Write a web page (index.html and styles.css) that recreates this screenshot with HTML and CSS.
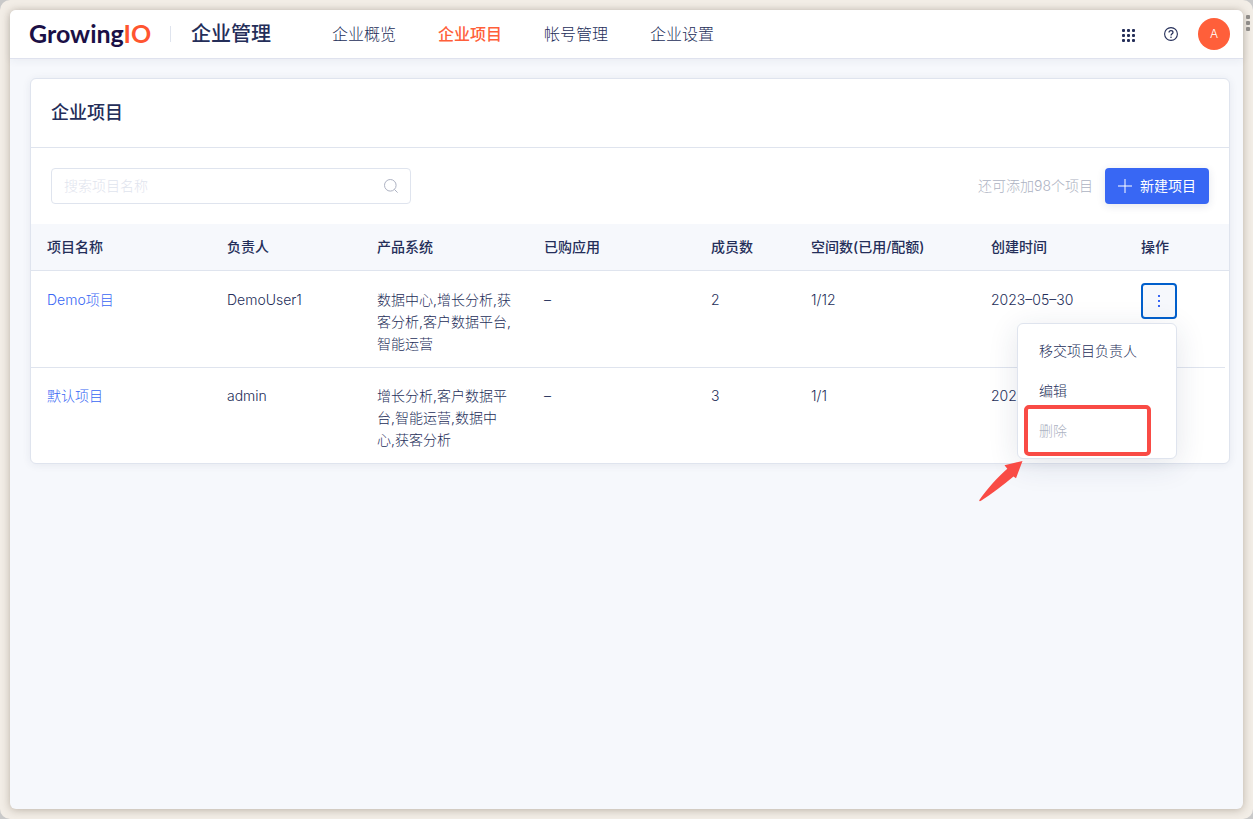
FILE: index.html
```html
<!DOCTYPE html>
<html lang="zh-CN">
<head>
<meta charset="utf-8">
<meta name="viewport" content="width=device-width, initial-scale=1">
<title>企业项目</title>
<link rel="stylesheet" href="styles.css">
</head>
<body>
<div class="desktop">
  <div class="window-grip"><i></i><i></i><i></i></div>
  <div class="window">
    <header class="topbar">
      <a class="logo" href="#">Growing<span class="logo-accent">IO</span></a>
      <span class="topbar-divider"></span>
      <span class="topbar-title">企业管理</span>
      <nav class="nav">
        <a class="nav-link" href="#">企业概览</a>
        <a class="nav-link active" href="#" aria-current="page">企业项目</a>
        <a class="nav-link" href="#">帐号管理</a>
        <a class="nav-link" href="#">企业设置</a>
      </nav>
      <div class="tools">
        <button class="icon-button" type="button" aria-label="应用">
          <svg width="16" height="18" viewBox="0 0 16 18" fill="currentColor"><rect x="1" y="4" width="3" height="3" rx="1"/><rect x="6" y="4" width="3" height="3" rx="1"/><rect x="11" y="4" width="3" height="3" rx="1"/><rect x="1" y="9" width="3" height="3" rx="1"/><rect x="6" y="9" width="3" height="3" rx="1"/><rect x="11" y="9" width="3" height="3" rx="1"/><rect x="1" y="14" width="3" height="3" rx="1"/><rect x="6" y="14" width="3" height="3" rx="1"/><rect x="11" y="14" width="3" height="3" rx="1"/></svg>
        </button>
        <button class="icon-button" type="button" aria-label="帮助">
          <svg width="14" height="14" viewBox="0 0 14 14" fill="none" stroke="currentColor"><circle cx="7" cy="7" r="6.4" stroke-width="1.1"/><path d="M5 5.6c0-1.2.8-2 2-2s2 .8 2 1.8c0 1.3-2 1.4-2 3" stroke-width="1.2"/><circle cx="7" cy="10.2" r="0.8" fill="currentColor" stroke="none"/></svg>
        </button>
        <button class="avatar" type="button">A</button>
      </div>
    </header>
    <main class="content">
      <section class="card">
        <h1 class="card-title">企业项目</h1>
        <div class="toolbar">
          <label class="search">
            <input class="search-input" type="text" placeholder="搜索项目名称" aria-label="搜索项目名称">
            <svg class="search-icon" width="14" height="14" viewBox="0 0 14 14" fill="none" stroke="currentColor"><circle cx="6.3" cy="6.3" r="5.8"/><path d="M10.4 10.4l3.2 3.2"/></svg>
          </label>
          <span class="quota">还可添加98个项目</span>
          <button class="create" type="button">
            <svg width="14" height="14" viewBox="0 0 14 14" stroke="currentColor"><path d="M7 0v14M0 7h14"/></svg>
            新建项目
          </button>
        </div>
        <table class="table">
          <colgroup>
            <col class="col-wide"><col class="col-mid"><col><col><col class="col-count"><col class="col-wide"><col class="col-mid"><col class="col-count"><col class="col-gutter">
          </colgroup>
          <thead>
            <tr><th>项目名称</th><th>负责人</th><th>产品系统</th><th>已购应用</th><th>成员数</th><th>空间数(已用/配额)</th><th>创建时间</th><th>操作</th><th class="gutter"></th></tr>
          </thead>
          <tbody>
            <tr>
              <td><a class="link" href="#">Demo项目</a></td>
              <td>DemoUser1</td>
              <td>数据中心,增长分析,获客分析,客户数据平台,智能运营</td>
              <td>–</td>
              <td>2</td>
              <td>1/12</td>
              <td>2023–05–30</td>
              <td class="action-cell">
                <div class="actions">
                  <button class="more" type="button" aria-label="更多操作" aria-expanded="true">
                    <svg width="4" height="14" viewBox="0 0 4 14" fill="currentColor"><rect x="1" y="1" width="2" height="2"/><rect x="1" y="6" width="2" height="2"/><rect x="1" y="11" width="2" height="2"/></svg>
                  </button>
                  <div class="menu">
                    <button class="menu-item" type="button">移交项目负责人</button>
                    <button class="menu-item" type="button">编辑</button>
                    <button class="menu-item" type="button" disabled>删除</button>
                    <span class="highlight"></span>
                    <svg class="arrow" width="46" height="44" viewBox="0 0 46 44" fill="#f94b45"><path d="M44.5 2 26.5 6.2 29.3 9.8C20 18 9 30 1.2 41.2Q1.4 42.8 3 41.8C14 34.5 25 26.5 35.5 17.5L38 19.2Z"/></svg>
                  </div>
                </div>
              </td>
              <td class="gutter"></td>
            </tr>
            <tr>
              <td><a class="link" href="#">默认项目</a></td>
              <td>admin</td>
              <td>增长分析,客户数据平台,智能运营,数据中心,获客分析</td>
              <td>–</td>
              <td>3</td>
              <td>1/1</td>
              <td>202</td>
              <td></td>
              <td class="gutter"></td>
            </tr>
          </tbody>
        </table>
      </section>
    </main>
  </div>
</div>
</body>
</html>
```
FILE: styles.css
```css
* { box-sizing: border-box; }

body {
  margin: 0;
  background: #c9c9c9;
  color: #242e59;
  font: 300 14px/22px Inter, "Noto Sans CJK SC", sans-serif;
}

button, input { font: inherit; color: inherit; }
button { border: 0; background: none; padding: 0; cursor: pointer; }
a { color: inherit; text-decoration: none; }

.desktop {
  position: relative;
  display: flex;
  min-height: 100vh;
  padding: 10px;
  border-radius: 10px;
  background: #f2ede6;
}

.window-grip {
  position: absolute;
  top: 15px;
  right: 3px;
  display: grid;
  gap: 2px;
}
.window-grip i { width: 4px; height: 4px; border-radius: 1px; background: #8f8c89; }

.window {
  flex: 1;
  border-radius: 6px;
  background: #f6f8fc;
  box-shadow: 0 1px 8px rgba(60, 40, 20, 0.3);
}

.topbar {
  display: flex;
  align-items: center;
  height: 49px;
  padding: 0 13px 0 19px;
  border-bottom: 1px solid #dfe2ee;
  border-radius: 6px 6px 0 0;
  background: #fff;
  box-shadow: 0 2px 8px rgba(36, 46, 89, 0.06);
}

.logo {
  width: 121px;
  padding-bottom: 2px;
  color: #1b1046;
  font: 700 25px/30px Lato, sans-serif;
  white-space: nowrap;
}
.logo-accent { color: #ff5530; }

.topbar-divider { width: 1px; height: 16px; margin: 0 20px; background: #dfe4ee; }
.topbar-title { font-size: 20px; font-weight: 500; }

.nav { display: flex; gap: 42px; margin-left: 61px; font-size: 16px; }
.nav-link.active { color: #ff5f3a; font-weight: 500; }

.tools { display: flex; align-items: center; gap: 10px; margin-left: auto; }
.icon-button { display: grid; place-items: center; width: 32px; height: 32px; }
.avatar {
  width: 32px;
  height: 32px;
  margin-left: 1px;
  border-radius: 50%;
  background: #ff5f3a;
  color: #fff;
  font-size: 12px;
}

.content { padding: 19px 13px 20px 20px; }

.card {
  border: 1px solid #dfe4ee;
  border-radius: 6px;
  background: #fff;
  box-shadow: 0 1px 8px rgba(36, 46, 89, 0.08);
}

.card-title {
  margin: 0;
  padding: 20px;
  border-bottom: 1px solid #dfe4ee;
  font-size: 18px;
  font-weight: 500;
  line-height: 28px;
}

.toolbar { display: flex; align-items: center; gap: 12px; padding: 20px; }

.search {
  display: flex;
  align-items: center;
  width: 360px;
  height: 36px;
  margin-right: auto;
  padding: 0 12px;
  border: 1px solid #dfe4ee;
  border-radius: 4px;
  color: #adb2c2;
}
.search-input { flex: 1; min-width: 0; padding: 0; border: 0; outline: 0; background: none; color: #242e59; }
.search-input::placeholder { color: #dfe4ee; }

.quota { color: #adb2c2; }

.create {
  display: flex;
  align-items: center;
  gap: 8px;
  height: 36px;
  padding: 0 13px;
  border-radius: 4px;
  background: #3867f4;
  color: #fff;
  font-weight: 400;
  box-shadow: 0 2px 8px rgba(36, 46, 89, 0.12);
}

.table { width: 100%; border-collapse: separate; border-spacing: 0; table-layout: fixed; }
.col-wide { width: 180px; }
.col-mid { width: 150px; }
.col-count { width: 100px; }
.col-gutter { width: 4px; }

th, td { border-bottom: 1px solid #dfe4ee; text-align: left; vertical-align: top; }
th { padding: 12px 16px; background: #f6f8fc; font-weight: 500; }
td { padding: 18px 16px 12px; }
tbody .gutter, tbody tr:last-child td { border-bottom: 0; }
tbody tr:last-child td { padding-top: 17px; }
th.gutter, td.gutter { padding: 0; }
td.action-cell { padding: 12px 16px; }

.link { color: #3867f4; }

.actions { position: relative; width: 36px; }
.more {
  display: grid;
  place-items: center;
  width: 36px;
  height: 36px;
  border: 2px solid #005fcc;
  border-radius: 4px;
  background: #f6f8fc;
  color: #3867f4;
}

.menu {
  position: absolute;
  z-index: 1;
  top: 40px;
  right: 0;
  width: 160px;
  padding: 7px 0;
  border: 1px solid #dfe4ee;
  border-radius: 6px;
  background: #fff;
  box-shadow: 0 6px 30px rgba(36, 46, 89, 0.12);
}
.menu-item { display: block; width: 100%; height: 40px; padding: 0 21px; text-align: left; }
.menu-item:disabled { color: #adb2c2; }

.highlight {
  position: absolute;
  top: 81px;
  left: 6px;
  width: 127px;
  height: 51px;
  border: 4px solid #f94b45;
  border-radius: 5px;
}
.arrow { position: absolute; top: 135px; left: -40px; }
```
